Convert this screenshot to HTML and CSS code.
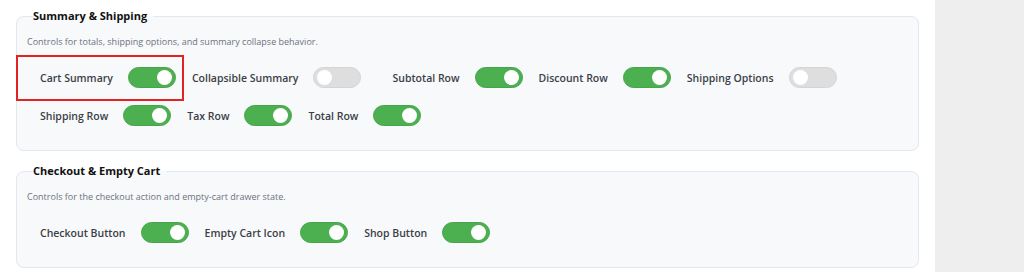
FILE: index.html
```html
<!DOCTYPE html>
<html lang="en">
<head>
    <meta charset="UTF-8">
    <meta name="viewport" content="width=device-width, initial-scale=1.0">
    <title>Cart Drawer Settings</title>
    <link rel="stylesheet" href="styles.css">
</head>
<body>
    <div class="layout">
        <!-- Settings panel -->
        <main class="panel">
            <fieldset class="group">
                <legend>Summary &amp; Shipping</legend>
                <p class="group-desc">Controls for totals, shipping options, and summary collapse behavior.</p>
                <div class="toggles">
                    <label class="toggle-item is-highlighted">
                        <span class="toggle-label">Cart Summary</span>
                        <span class="switch on"></span>
                    </label>
                    <label class="toggle-item wide">
                        <span class="toggle-label">Collapsible Summary</span>
                        <span class="switch"></span>
                    </label>
                    <label class="toggle-item">
                        <span class="toggle-label">Subtotal Row</span>
                        <span class="switch on"></span>
                    </label>
                    <label class="toggle-item">
                        <span class="toggle-label">Discount Row</span>
                        <span class="switch on"></span>
                    </label>
                    <label class="toggle-item">
                        <span class="toggle-label">Shipping Options</span>
                        <span class="switch"></span>
                    </label>
                </div>
                <div class="toggles">
                    <label class="toggle-item">
                        <span class="toggle-label">Shipping Row</span>
                        <span class="switch on"></span>
                    </label>
                    <label class="toggle-item">
                        <span class="toggle-label">Tax Row</span>
                        <span class="switch on"></span>
                    </label>
                    <label class="toggle-item">
                        <span class="toggle-label">Total Row</span>
                        <span class="switch on"></span>
                    </label>
                </div>
            </fieldset>

            <fieldset class="group">
                <legend>Checkout &amp; Empty Cart</legend>
                <p class="group-desc">Controls for the checkout action and empty-cart drawer state.</p>
                <div class="toggles">
                    <label class="toggle-item">
                        <span class="toggle-label">Checkout Button</span>
                        <span class="switch on"></span>
                    </label>
                    <label class="toggle-item">
                        <span class="toggle-label">Empty Cart Icon</span>
                        <span class="switch on"></span>
                    </label>
                    <label class="toggle-item">
                        <span class="toggle-label">Shop Button</span>
                        <span class="switch on"></span>
                    </label>
                </div>
            </fieldset>
        </main>

        <!-- Preview side -->
        <aside class="side"></aside>
    </div>
</body>
</html>
```

FILE: styles.css
```css
/* Basic Reset */
* {
    box-sizing: border-box;
    margin: 0;
    padding: 0;
}

body {
    font-family: "Open Sans", "Noto Sans", Arial, sans-serif;
    background: #fff;
    color: #333;
}

.layout {
    display: flex;
    min-height: 272px;
}

/* Settings panel */
.panel {
    width: 935px;
    background: #fff;
    padding: 9px 16px 0 16px;
}

.side {
    flex: 1;
    background: #eeeeee;
}

.group {
    border: 1px solid #e3e8ef;
    border-radius: 8px;
    background: #f8f9fb;
    padding: 0 10px 24px 10px;
    margin-bottom: 13px;
}

.group legend {
    margin-left: 6px;
    padding: 0 6px 0 0;
    font-size: 11px;
    line-height: 14px;
    font-weight: 700;
    color: #111;
}

.group-desc {
    margin-top: 12px;
    font-size: 9px;
    line-height: 14px;
    color: #6b7280;
}

/* Toggle rows */
.toggles {
    display: flex;
    gap: 16px;
    padding-left: 13px;
    margin-top: 17px;
}

.group-desc + .toggles {
    margin-top: 18px;
}

.toggle-item {
    display: flex;
    align-items: center;
    gap: 15px;
    position: relative;
}

.toggle-item.wide {
    margin-right: 15px;
}

.toggle-label {
    font-size: 10.5px;
    font-weight: 600;
    color: #3a3f47;
}

.switch {
    position: relative;
    width: 48px;
    height: 21px;
    border-radius: 11px;
    background: #dedede;
    border: 1px solid #d4d4d4;
}

.switch::after {
    content: "";
    position: absolute;
    top: 2px;
    left: 3px;
    width: 15px;
    height: 15px;
    border-radius: 50%;
    background: #fff;
}

.switch.on {
    background: #4caf50;
    border-color: #46a54a;
}

.switch.on::after {
    left: auto;
    right: 3px;
}

/* Highlight annotation */
.is-highlighted::before {
    content: "";
    position: absolute;
    top: -12px;
    bottom: -13px;
    left: -24px;
    right: -8px;
    border: 2px solid #e32222;
}
```
